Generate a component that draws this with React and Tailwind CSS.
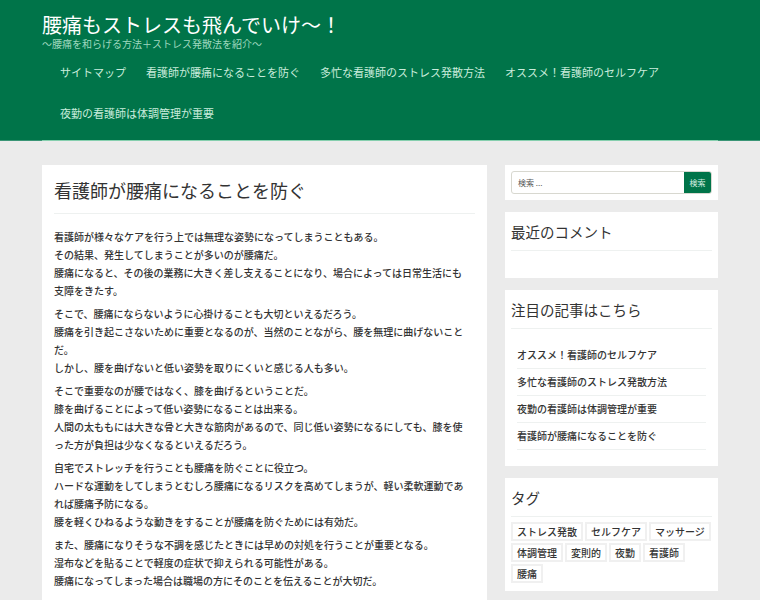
const font = { fontFamily: '"Noto Sans CJK JP", "Noto Sans", sans-serif' }

const navItems = [
  'サイトマップ',
  '看護師が腰痛になることを防ぐ',
  '多忙な看護師のストレス発散方法',
  'オススメ！看護師のセルフケア',
  '夜勤の看護師は体調管理が重要',
]

const paragraphs = [
  [
    '看護師が様々なケアを行う上では無理な姿勢になってしまうこともある。',
    'その結果、発生してしまうことが多いのが腰痛だ。',
    '腰痛になると、その後の業務に大きく差し支えることになり、場合によっては日常生活にも支障をきたす。',
  ],
  [
    'そこで、腰痛にならないように心掛けることも大切といえるだろう。',
    '腰痛を引き起こさないために重要となるのが、当然のことながら、腰を無理に曲げないことだ。',
    'しかし、腰を曲げないと低い姿勢を取りにくいと感じる人も多い。',
  ],
  [
    'そこで重要なのが腰ではなく、膝を曲げるということだ。',
    '膝を曲げることによって低い姿勢になることは出来る。',
    '人間の太ももには大きな骨と大きな筋肉があるので、同じ低い姿勢になるにしても、膝を使った方が負担は少なくなるといえるだろう。',
  ],
  [
    '自宅でストレッチを行うことも腰痛を防ぐことに役立つ。',
    'ハードな運動をしてしまうとむしろ腰痛になるリスクを高めてしまうが、軽い柔軟運動であれば腰痛予防になる。',
    '腰を軽くひねるような動きをすることが腰痛を防ぐためには有効だ。',
  ],
  [
    'また、腰痛になりそうな不調を感じたときには早めの対処を行うことが重要となる。',
    '湿布などを貼ることで軽度の症状で抑えられる可能性がある。',
    '腰痛になってしまった場合は職場の方にそのことを伝えることが大切だ。',
  ],
]

const featured = [
  'オススメ！看護師のセルフケア',
  '多忙な看護師のストレス発散方法',
  '夜勤の看護師は体調管理が重要',
  '看護師が腰痛になることを防ぐ',
]

const tags = ['ストレス発散', 'セルフケア', 'マッサージ', '体調管理', '変則的', '夜勤', '看護師', '腰痛']

function WidgetTitle({ children }) {
  return (
    <h3 className="text-[14.5px] leading-[20px] text-[#333] pt-[10px] pb-[8px] border-b border-[#eef1f0]">
      {children}
    </h3>
  )
}

export default function App() {
  return (
    <div className="w-[760px] min-h-[600px] bg-[#ebebeb]" style={font}>
      <header className="bg-[#007449] border-b border-[#3a9576]">
        <div className="mx-[42px] border-b border-[#86cfae] -mb-px">
          <div className="pt-[13px]">
            <h1 className="text-[20px] leading-[24px] text-white">腰痛もストレスも飛んでいけ～！</h1>
            <p className="text-[10px] leading-[12px] text-[#9fd8bf] mt-[1px]">～腰痛を和らげる方法＋ストレス発散法を紹介～</p>
          </div>
          <ul className="flex flex-wrap gap-x-[20px] pl-[18px] mt-[2px] pb-[6px]">
            {navItems.map((item) => (
              <li key={item} className="h-[41px] flex items-center text-[11px] text-[#c9ecdc]">
                {item}
              </li>
            ))}
          </ul>
        </div>
      </header>

      <div className="mx-[42px] pt-[24px] flex gap-[18px] items-start">
        <main className="w-[445px] bg-white px-[12px] pb-[20px]">
          <h2 className="text-[18px] leading-[26px] text-[#333] pt-[12px] pb-[10px] border-b border-[#eef1f0]">
            看護師が腰痛になることを防ぐ
          </h2>
          <div className="pt-[14px] pr-[6px] text-[10px] leading-[18px] text-[#333] font-medium">
            {paragraphs.map((lines, i) => (
              <p key={i} className="mb-[5px]">
                {lines.map((line, j) => (
                  <span key={j}>
                    {line}
                    {j < lines.length - 1 && <br />}
                  </span>
                ))}
              </p>
            ))}
          </div>
        </main>

        <aside className="w-[213px] flex flex-col gap-[12px]">
          <div className="bg-white p-[6px] h-[35px]">
            <div className="flex h-[23px] rounded-[3px] border border-[#d8d8d0] overflow-hidden">
              <div className="flex-1 flex items-center pl-[6px] text-[8px] text-[#555]">検索 ...</div>
              <div className="w-[27px] bg-[#007449] flex items-center justify-center text-[8px] text-[#d8f0e4]">
                検索
              </div>
            </div>
          </div>

          <div className="bg-white px-[6px] h-[66px]">
            <WidgetTitle>最近のコメント</WidgetTitle>
          </div>

          <div className="bg-white px-[6px] pb-[16px]">
            <WidgetTitle>注目の記事はこちら</WidgetTitle>
            <ul className="px-[6px] pt-[13px]">
              {featured.map((item) => (
                <li key={item} className="text-[10px] leading-[26px] text-[#333] font-medium border-b border-[#eef1f0]">
                  {item}
                </li>
              ))}
            </ul>
          </div>

          <div className="bg-white px-[6px] pb-[8px]">
            <WidgetTitle>タグ</WidgetTitle>
            <div className="flex flex-wrap gap-[2px] pt-[5px]">
              {tags.map((t) => (
                <span
                  key={t}
                  className="border-2 border-[#f0f0f0] px-[4px] h-[19px] flex items-center text-[10px] text-[#333] font-medium"
                >
                  {t}
                </span>
              ))}
            </div>
          </div>
        </aside>
      </div>
    </div>
  )
}
